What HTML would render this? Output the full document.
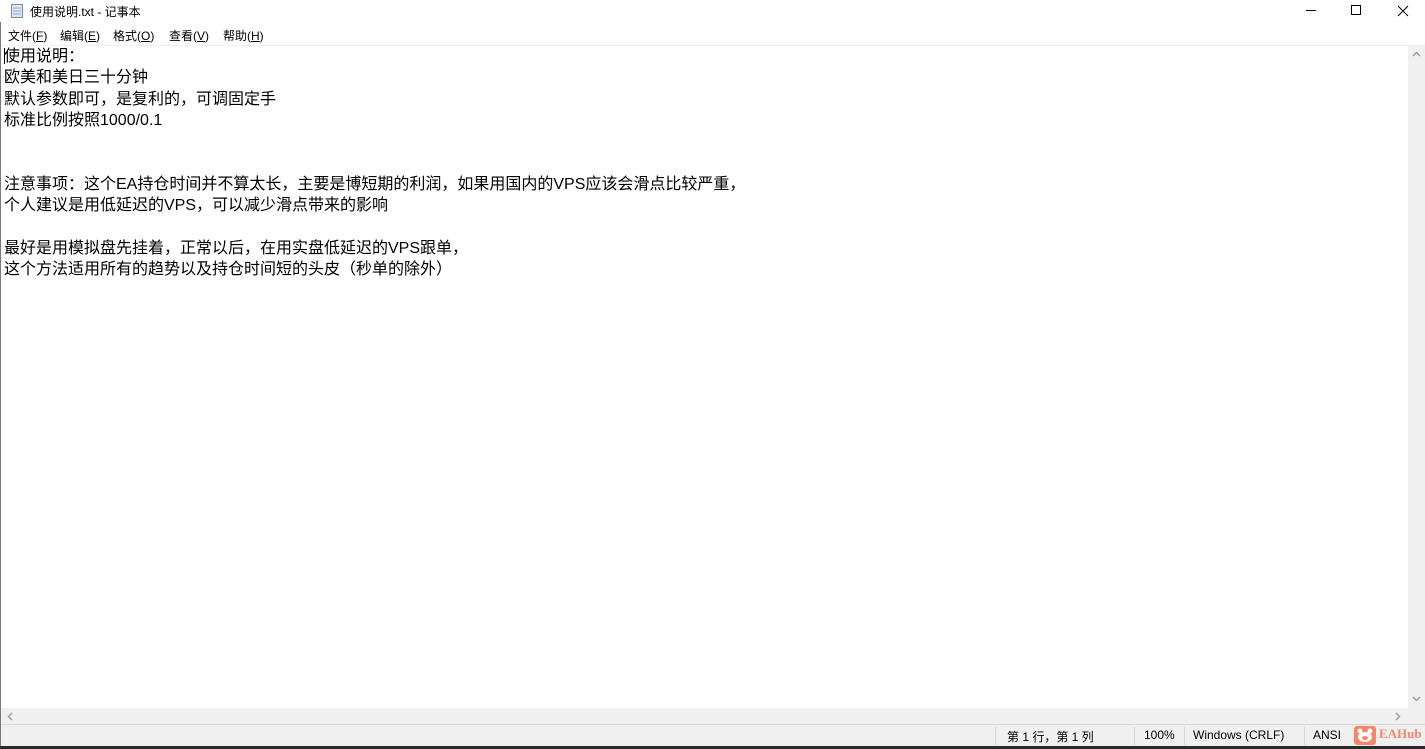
<!DOCTYPE html>
<html><head><meta charset="utf-8"><style>
*{margin:0;padding:0;box-sizing:border-box}
body{width:1425px;height:749px;overflow:hidden;background:#fff;font-family:"Liberation Sans","Noto Sans CJK SC",sans-serif;position:relative;color:#000}
.abs{position:absolute}
#title{left:0;top:0;width:1425px;height:22px;background:#fff}
#title .t{left:30px;top:3px;font-size:12px}
#menu{left:0;top:22px;width:1425px;height:22px;background:#fff;font-size:12px}
#menu span{position:absolute;top:5px}
#edit{left:1px;top:45px;width:1407px;height:663px;background:#fff;border-top:1px solid #f0f0f0}
#text{left:4px;top:46px;font-size:16px;line-height:21.3px;white-space:pre}
#vs{left:1408px;top:45px;width:17px;height:663px;background:#f0f0f0}
#hs{left:1px;top:708px;width:1407px;height:16px;background:#f0f0f0}
#corner{left:1408px;top:708px;width:17px;height:16px;background:#f0f0f0}
#sb{left:1px;top:724px;width:1424px;height:22px;background:#f0f0f0;border-top:1px solid #d7d7d7;font-size:12px}
#sb span{position:absolute;top:3px}
.sep{position:absolute;top:2px;width:1px;height:18px;background:#d7d7d7}
#dark{left:0;top:746px;width:1425px;height:3px;background:#2b2b2b}
#lb{left:0;top:22px;width:1px;height:724px;background:#7a7a7a}
</style></head><body>
<div id="title" class="abs">
<svg class="abs" style="left:10px;top:3px" width="14" height="16" viewBox="0 0 14 16"><rect x="1.5" y="1.5" width="11" height="13" fill="#dbe9f5" stroke="#6f8fae"/><line x1="3" y1="5" x2="11" y2="5" stroke="#9ab"/><line x1="3" y1="8" x2="11" y2="8" stroke="#9ab"/><line x1="3" y1="11" x2="11" y2="11" stroke="#9ab"/></svg>
<span class="abs t">使用说明.txt - 记事本</span>
<svg class="abs" style="left:1300px;top:4px" width="120" height="14"><line x1="6" y1="6.5" x2="16" y2="6.5" stroke="#000"/><rect x="51.5" y="1.5" width="9" height="9" fill="none" stroke="#000"/><path d="M98 2 L108 12 M108 2 L98 12" stroke="#000"/></svg>
</div>
<div id="menu" class="abs">
<span style="left:8px">文件(<u>F</u>)</span>
<span style="left:60px">编辑(<u>E</u>)</span>
<span style="left:113px">格式(<u>O</u>)</span>
<span style="left:169px">查看(<u>V</u>)</span>
<span style="left:223px">帮助(<u>H</u>)</span>
</div>
<div id="lb" class="abs"></div>
<div id="edit" class="abs"></div>
<div id="text" class="abs">使用说明：
欧美和美日三十分钟
默认参数即可，是复利的，可调固定手
标准比例按照1000/0.1


注意事项：这个EA持仓时间并不算太长，主要是博短期的利润，如果用国内的VPS应该会滑点比较严重，
个人建议是用低延迟的VPS，可以减少滑点带来的影响

最好是用模拟盘先挂着，正常以后，在用实盘低延迟的VPS跟单，
这个方法适用所有的趋势以及持仓时间短的头皮（秒单的除外）</div>
<div class="abs" style="left:4px;top:48px;width:1px;height:16px;background:#000"></div>
<div id="vs" class="abs"><svg class="abs" style="left:4px;top:6px" width="9" height="6"><path d="M1 5 L4.5 1.5 L8 5" stroke="#a0a0a0" stroke-width="1.5" fill="none"/></svg><svg class="abs" style="left:4px;top:651px" width="9" height="6"><path d="M1 1 L4.5 4.5 L8 1" stroke="#a0a0a0" stroke-width="1.5" fill="none"/></svg></div>
<div id="hs" class="abs"><svg class="abs" style="left:6px;top:4px" width="6" height="9"><path d="M5 1 L1.5 4.5 L5 8" stroke="#a0a0a0" stroke-width="1.5" fill="none"/></svg><svg class="abs" style="left:1394px;top:4px" width="6" height="9"><path d="M1 1 L4.5 4.5 L1 8" stroke="#a0a0a0" stroke-width="1.5" fill="none"/></svg></div>
<div id="corner" class="abs"></div>
<div id="sb" class="abs">
<div class="sep" style="left:994px"></div>
<span style="left:1006px">第 1 行，第 1 列</span>
<div class="sep" style="left:1133px"></div>
<span style="left:1143px">100%</span>
<div class="sep" style="left:1183px"></div>
<span style="left:1192px">Windows (CRLF)</span>
<div class="sep" style="left:1303px"></div>
<span style="left:1312px">ANSI</span>
<svg class="abs" style="left:1353px;top:1px" width="22" height="19"><rect x="0" y="0" width="22" height="19" rx="3" fill="#f4866e"/><circle cx="6" cy="5" r="2.5" fill="#fff"/><circle cx="16" cy="5" r="2.5" fill="#fff"/><ellipse cx="11" cy="11" rx="7" ry="5" fill="#fff"/><ellipse cx="11" cy="12" rx="3" ry="2" fill="#f4866e"/></svg>
<span style="left:1378px;top:1px;color:#f4866e;font-weight:bold;font-family:'Liberation Serif',serif;font-size:13px">EAHub</span>
</div>
<div id="dark" class="abs"></div>
</body></html>
